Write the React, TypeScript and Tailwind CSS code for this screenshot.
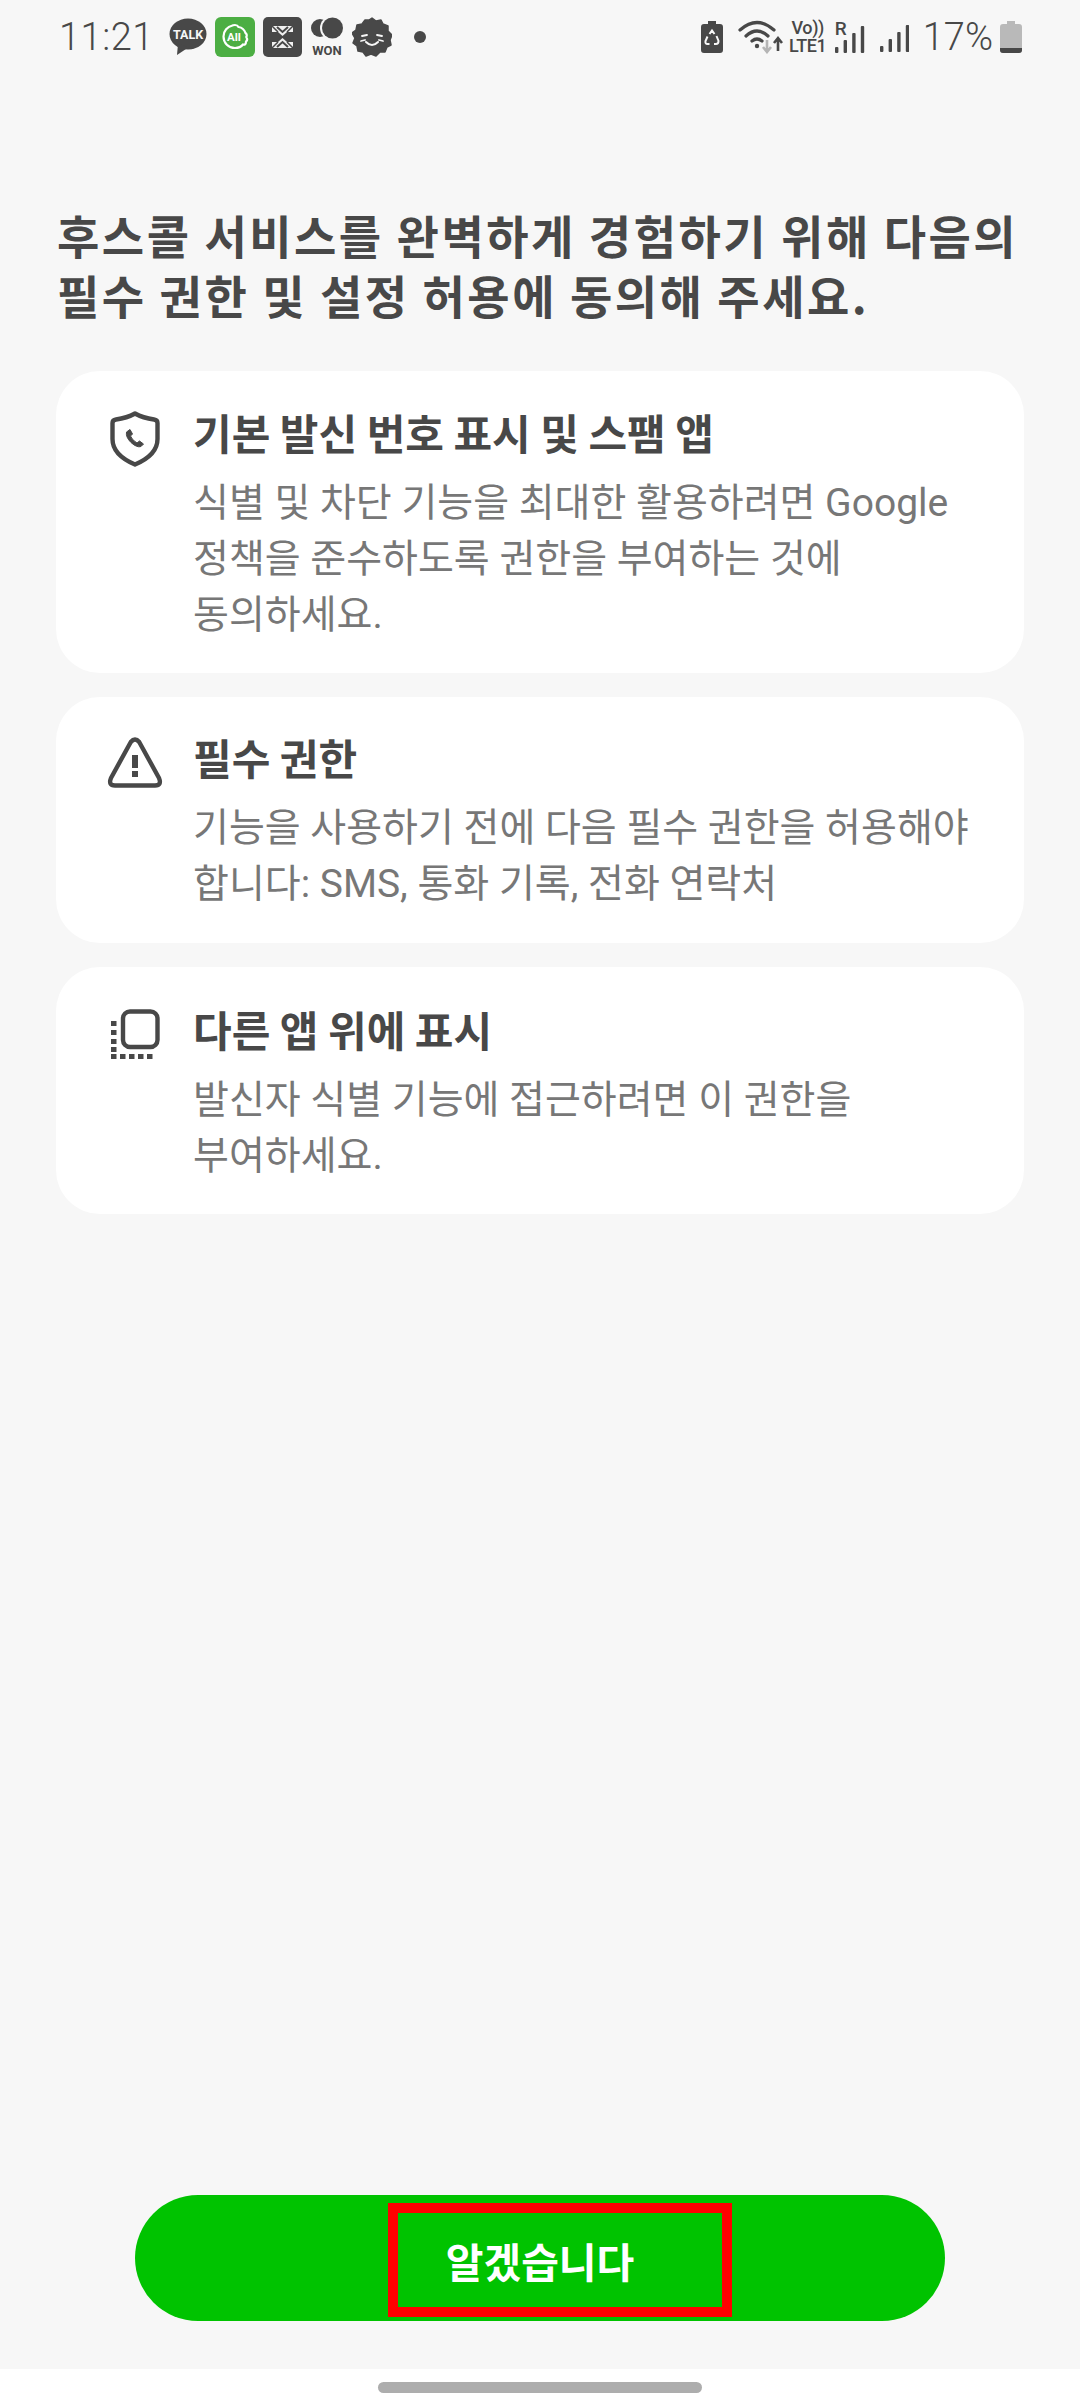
import type { ReactNode } from "react";

const SANS = "font-['Roboto','Noto_Sans_CJK_KR',sans-serif]";
const KR = "font-['Noto_Sans_CJK_KR','Noto_Sans',sans-serif]";

function TalkIcon() {
  return (
    <svg width="38" height="38" viewBox="0 0 38 38" className="shrink-0">
      <ellipse cx="19" cy="16" rx="18.5" ry="15.5" fill="#484848" />
      <path d="M9 26 L8 37 L20 29 Z" fill="#484848" />
      <text x="19" y="21" textAnchor="middle" fontSize="12.5" fontWeight="700" fill="#f7f7f7" fontFamily="Roboto">
        TALK
      </text>
    </svg>
  );
}

function AllIcon() {
  return (
    <svg width="40" height="40" viewBox="0 0 40 40" className="shrink-0">
      <rect width="40" height="40" rx="6" fill="#4cae43" />
      <path
        d="M20 8 c2 0 3 1 3.5 2 c3 .5 6 3 7 6 c1.500 1 1.500 3 .8 4 c1 1.500 1 3.500 -.3 4.500 c0 3 -1.500 3.500 -3 3 c-1.500 2 -4.500 3.500 -8 3.500 c-6.500 0 -11.500 -5 -11.500 -11.500 c0 -5.500 4 -10 9 -11 c.5 -.5 1.500 -.5 2.500 -.5 Z"
        fill="none"
        stroke="#fff"
        strokeWidth="2.200"
      />
      <text x="19" y="24" textAnchor="middle" fontSize="11.500" fontWeight="700" fill="#fff" fontFamily="Roboto">
        All
      </text>
    </svg>
  );
}

function CompressBoxIcon() {
  return (
    <svg width="39" height="40" viewBox="0 0 39 40" className="shrink-0">
      <rect width="39" height="40" rx="5" fill="#484848" />
      <path d="M9 9 H30 V15 L24 15 L19.500 19 L15 15 L9 15 Z" fill="#f0f0f0" />
      <path d="M9 31 H30 V25 L24 25 L19.500 21 L15 25 L9 25 Z" fill="#f0f0f0" />
      <path d="M14 10 L19.500 15 L25 10 M14 30 L19.500 25 L25 30" stroke="#484848" strokeWidth="2" fill="none" />
      <path d="M9 9 L15 15 M30 9 L24 15 M9 31 L15 25 M30 31 L24 25" stroke="#484848" strokeWidth="1.500" />
    </svg>
  );
}

function WonIcon() {
  return (
    <svg width="34" height="40" viewBox="0 0 34 40" className="shrink-0">
      <circle cx="10" cy="11" r="9" fill="#484848" />
      <circle cx="22" cy="11" r="12" fill="#f7f7f7" />
      <circle cx="22.500" cy="11" r="10.500" fill="#484848" />
      <text x="17" y="38" textAnchor="middle" fontSize="13" fontWeight="700" fill="#484848" fontFamily="Roboto">
        WON
      </text>
    </svg>
  );
}

function MonsterIcon() {
  return (
    <svg width="40" height="40" viewBox="0 0 40 40" className="shrink-0">
      <path
        d="M20 1 L24 4 L29 3 L31 7 L36 9 L36 14 L40 18 L38 23 L39 28 L35 30 L33 35 L28 35 L24 39 L19 37 L14 39 L11 35 L6 34 L5 29 L1 26 L3 21 L0 16 L4 13 L5 8 L10 7 L13 3 L17 3 Z"
        fill="#484848"
        stroke="#484848"
        strokeWidth="1.500"
        strokeLinejoin="round"
      />
      <path d="M10 19 L15 18 M25 18 L30 19 M9 24 L13 23 M27 23 L31 24" stroke="#f7f7f7" strokeWidth="1.800" strokeLinecap="round" />
      <path d="M14 25 Q20 31 26 25" stroke="#f7f7f7" strokeWidth="2" fill="none" strokeLinecap="round" />
    </svg>
  );
}

function RecycleBatteryIcon() {
  return (
    <svg width="22" height="32" viewBox="0 0 22 32" className="shrink-0">
      <path d="M7 0 H15 V3 H19 Q22 3 22 6 V29 Q22 32 19 32 H3 Q0 32 0 29 V6 Q0 3 3 3 H7 Z" fill="#484848" />
      <path d="M8.500 13 L11 9.500 L13.500 13 M15.500 15 L17.500 20 Q17.500 23 15 23 H13 M8.500 23 H6.500 Q4 23 4.500 20 L6.500 15.500" fill="none" stroke="#f7f7f7" strokeWidth="2" />
    </svg>
  );
}

function WifiIcon() {
  return (
    <svg width="46" height="34" viewBox="0 0 46 34" className="shrink-0">
      <path d="M2 10 Q19 -5 36 10" fill="none" stroke="#484848" strokeWidth="3.200" strokeLinecap="round" />
      <path d="M8 16 Q19 6 30 16" fill="none" stroke="#484848" strokeWidth="3.200" strokeLinecap="round" />
      <path d="M14 21 Q19 17 24 21" fill="none" stroke="#484848" strokeWidth="3.200" strokeLinecap="round" />
      <circle cx="19" cy="26" r="2.200" fill="#484848" />
      <path d="M29 20 V31 M25 27 L29 32 L33 27" fill="none" stroke="#b5b5b5" strokeWidth="2.600" />
      <path d="M40 31 V19 M36 23 L40 18 L44 23" fill="none" stroke="#484848" strokeWidth="2.600" />
    </svg>
  );
}

function SignalBars({ width }: { width: number }) {
  const bars = [24, 17, 10, 3];
  return (
    <svg width={width} height="30" viewBox={`0 0 ${width} 30`} className="shrink-0">
      {bars.map((y, i) => (
        <rect key={y} x={i * 8.600} y={y} width="3.400" height={30 - y} rx="1" fill="#484848" />
      ))}
    </svg>
  );
}

function BatteryIcon() {
  return (
    <svg width="22" height="32" viewBox="0 0 22 32" className="shrink-0">
      <path d="M7 0 H15 V3 H19 Q22 3 22 6 V29 Q22 32 19 32 H3 Q0 32 0 29 V6 Q0 3 3 3 H7 Z" fill="#b9b9b9" />
      <path d="M0 27 H22 V29 Q22 32 19 32 H3 Q0 32 0 29 Z" fill="#484848" />
    </svg>
  );
}

function StatusBar() {
  return (
    <div className={`flex h-[74px] shrink-0 items-center pl-[59px] pr-[58px] text-[#484848] ${SANS}`}>
      <span className="w-[91px] text-[38px] font-light leading-none tracking-[0.5px]">11:21</span>
      <div className="ml-[19px] flex items-center gap-[8px]">
        <TalkIcon />
        <AllIcon />
        <CompressBoxIcon />
        <WonIcon />
        <MonsterIcon />
      </div>
      <div className="ml-[22px] h-[12px] w-[12px] rounded-full bg-[#484848]" />
      <div className="ml-auto flex items-center">
        <RecycleBatteryIcon />
        <div className="ml-[15px]">
          <WifiIcon />
        </div>
        <div className="ml-[4px] flex w-[40px] flex-col items-center font-['Roboto',sans-serif] text-[18px] font-medium leading-[18px] tracking-[-0.4px]">
          <span>Vo))</span>
          <span>LTE1</span>
        </div>
        <div className="relative ml-[7px] pt-[2px]">
          <span className="absolute left-0 top-[-2px] text-[19px] font-medium leading-none">R</span>
          <SignalBars width={30} />
        </div>
        <div className="ml-[15px]">
          <SignalBars width={29} />
        </div>
        <span className="ml-[14px] text-[38px] font-light leading-none">17%</span>
        <div className="ml-[7px]">
          <BatteryIcon />
        </div>
      </div>
    </div>
  );
}

function ShieldPhone() {
  return (
    <svg width="50" height="56" viewBox="0 0 50 56" className="shrink-0" fill="none">
      <path
        d="M25 2.500 Q33 7 44 8.500 Q47.500 9 47.500 12 V28 Q47.500 44 25 53.500 Q2.500 44 2.500 28 V12 Q2.500 9 6 8.500 Q17 7 25 2.500 Z"
        stroke="#484848"
        strokeWidth="4.400"
        strokeLinejoin="round"
      />
      <path
        d="M16.500 21 L20 18.500 L22.500 23 L20.500 25 Q22 29 27 32 L29.500 30 L33.500 33 L31 35.500 Q27 37 21 31.500 Q15.500 26 16.500 21 Z"
        fill="#484848"
        stroke="#484848"
        strokeWidth="1"
        strokeLinejoin="round"
      />
    </svg>
  );
}

function WarningIcon() {
  return (
    <svg width="56" height="52" viewBox="0 0 56 52" className="shrink-0" fill="none">
      <path
        d="M23.800 5 Q28 0 32.200 5 L52 41 Q55 48.500 48 48.500 H8 Q1 48.500 4 41 Z"
        stroke="#484848"
        strokeWidth="4.400"
        strokeLinejoin="round"
      />
      <rect x="25" y="18" width="6" height="13" fill="#484848" />
      <rect x="25" y="34" width="6" height="6" fill="#484848" />
    </svg>
  );
}

function OverlayIcon() {
  return (
    <svg width="50" height="50" viewBox="0 0 50 50" className="shrink-0" fill="none">
      <rect x="13" y="2.500" width="34.500" height="35.500" rx="7" stroke="#484848" strokeWidth="4.400" />
      {[12, 21, 30, 38].map((y) => (
        <rect key={y} x="1" y={y} width="5.500" height="5" fill="#484848" />
      ))}
      {[1, 10, 19, 28, 37].map((x) => (
        <rect key={x} x={x} y="45" width="5.500" height="5" fill="#484848" />
      ))}
    </svg>
  );
}

type CardProps = {
  icon: ReactNode;
  title: string;
  lines: string[];
  top: string;
  height: string;
  iconTop: string;
};

function PermissionCard({ icon, title, lines, top, height, iconTop }: CardProps) {
  return (
    <section className={`flex rounded-[44px] bg-white pl-[48px] ${height} ${top}`}>
      <div className={`mr-[27px] flex w-[62px] shrink-0 justify-center ${iconTop}`}>{icon}</div>
      <div className="min-w-0 flex-1 pr-[40px]">
        <h2 className="whitespace-nowrap text-[42px] font-bold leading-[50px] text-[#484848]">{title}</h2>
        <div className={`mt-[18px] text-[39px] leading-[56px] text-[#777777] ${SANS}`}>
          {lines.map((line) => (
            <p key={line} className="whitespace-nowrap">
              {line}
            </p>
          ))}
        </div>
      </div>
    </section>
  );
}

export default function App() {
  return (
    <div className={`flex h-[2408px] w-[1080px] flex-col overflow-hidden bg-[#f7f7f7] ${KR}`}>
      <StatusBar />

      <div className="mt-[130px] flex flex-col gap-0 whitespace-nowrap pl-[57px] text-[46px] font-bold leading-[60px] tracking-[2.5px] text-[#484848]">
        <h1>후스콜 서비스를 완벽하게 경험하기 위해 다음의</h1>
        <p>필수 권한 및 설정 허용에 동의해 주세요.</p>
      </div>

      <div className="mt-[47px] flex flex-col gap-[24px] px-[56px]">
        <PermissionCard
          icon={<ShieldPhone />}
          title="기본 발신 번호 표시 및 스팸 앱"
          lines={["식별 및 차단 기능을 최대한 활용하려면 Google", "정책을 준수하도록 권한을 부여하는 것에", "동의하세요."]}
          top="pt-[36px]"
          height="h-[302px]"
          iconTop="pt-[4px]"
        />
        <PermissionCard
          icon={<WarningIcon />}
          title="필수 권한"
          lines={["기능을 사용하기 전에 다음 필수 권한을 허용해야", "합니다: SMS, 통화 기록, 전화 연락처"]}
          top="pt-[35px]"
          height="h-[246px]"
          iconTop="pt-[5px]"
        />
        <PermissionCard
          icon={<OverlayIcon />}
          title="다른 앱 위에 표시"
          lines={["발신자 식별 기능에 접근하려면 이 권한을", "부여하세요."]}
          top="pt-[37px]"
          height="h-[247px]"
          iconTop="pt-[5px]"
        />
      </div>

      <div className="mt-auto flex h-[174px] shrink-0 justify-center">
        <button className="flex h-[126px] w-[810px] items-center justify-center rounded-full bg-[#00c300]">
          <span className="ml-[40px] mt-[4px] flex h-[114px] w-[344px] items-center justify-center border-[10px] border-[#ff0000] pr-[40px] text-[41px] font-bold leading-none text-white">
            알겠습니다
          </span>
        </button>
      </div>

      <div className="flex h-[39px] shrink-0 items-start justify-center bg-white pt-[13px]">
        <div className="h-[11px] w-[324px] rounded-full bg-[#adadad]" />
      </div>
    </div>
  );
}
